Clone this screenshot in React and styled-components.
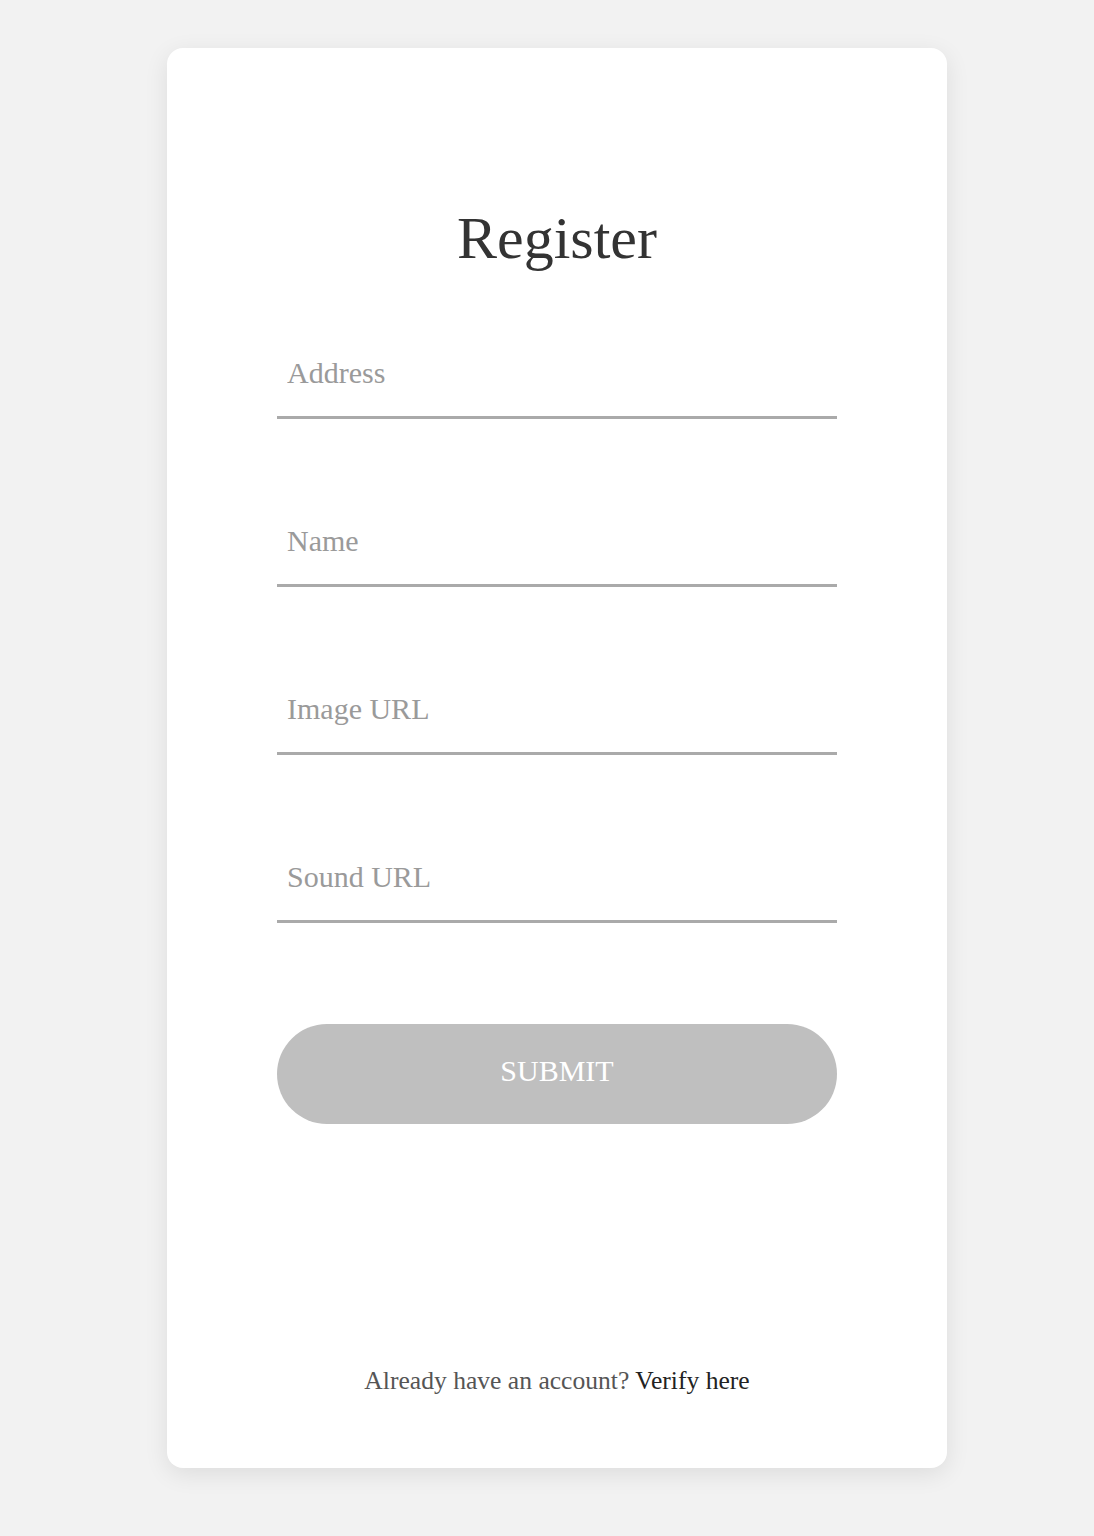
import React from "react";
import styled, { createGlobalStyle } from "styled-components";

const GlobalStyle = createGlobalStyle`
  html, body {
    margin: 0;
    padding: 0;
    background: #f2f2f2;
  }
  body {
    font-family: "Liberation Serif", "Times New Roman", serif;
  }
  * { box-sizing: border-box; }
`;

const Page = styled.div`
  min-height: 1536px;
  padding: 48px 0 48px 20px;
  display: flex;
  justify-content: center;
  align-items: flex-start;
`;

const Card = styled.div`
  width: 780px;
  height: 1420px;
  background: #fff;
  border-radius: 16px;
  box-shadow: 0 6px 24px rgba(0, 0, 0, 0.09);
  padding: 155px 110px 72px;
  display: flex;
  flex-direction: column;
  align-items: stretch;
`;

const Title = styled.h1`
  margin: 0;
  font-weight: 400;
  font-size: 60px;
  line-height: 70px;
  color: #333;
  text-align: center;
`;

const Form = styled.form`
  display: flex;
  flex-direction: column;
  gap: 79px;
  margin-top: 57px;
`;

const Input = styled.input`
  display: block;
  width: 100%;
  height: 89px;
  border: none;
  border-bottom: 3px solid #aaaaaa;
  outline: none;
  padding: 0 10px;
  font-family: "Liberation Serif", "Times New Roman", serif;
  font-size: 30px;
  color: #333;
  background: transparent;
  &::placeholder {
    color: #9a9a9a;
  }
`;

const Button = styled.button`
  margin-top: 22px;
  width: 100%;
  height: 100px;
  padding: 0 0 6px;
  border: none;
  border-radius: 50px;
  background: #bfbfbf;
  color: #fff;
  font-family: "Liberation Serif", "Times New Roman", serif;
  font-size: 30px;
  text-transform: uppercase;
  cursor: pointer;
`;

const Footer = styled.p`
  margin: auto 0 0;
  text-align: center;
  font-size: 25.6px;
  color: #555;
`;

const FooterLink = styled.a`
  color: #222;
  text-decoration: none;
`;

export default function App() {
  return (
    <>
      <GlobalStyle />
      <Page>
        <Card>
          <Title>Register</Title>
          <Form onSubmit={(e) => e.preventDefault()}>
            <Input placeholder="Address" />
            <Input placeholder="Name" />
            <Input placeholder="Image URL" />
            <Input placeholder="Sound URL" />
            <Button type="submit">Submit</Button>
          </Form>
          <Footer>
            Already have an account? <FooterLink href="#">Verify here</FooterLink>
          </Footer>
        </Card>
      </Page>
    </>
  );
}
